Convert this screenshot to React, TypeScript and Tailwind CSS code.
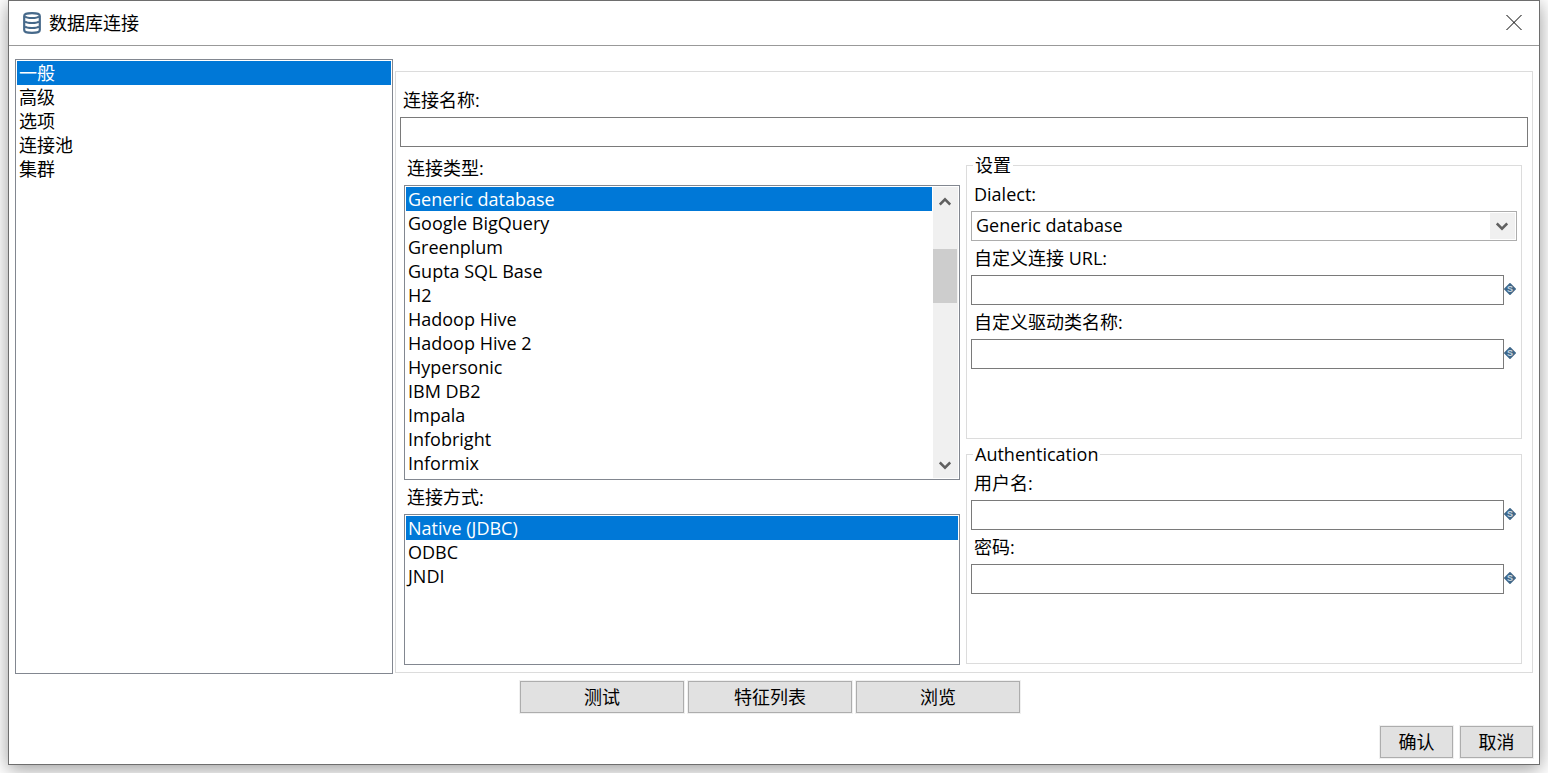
import { useState } from "react";
import type { ReactNode } from "react";

const sections = ["一般", "高级", "选项", "连接池", "集群"];

const databases = [
    "Generic database",
    "Google BigQuery",
    "Greenplum",
    "Gupta SQL Base",
    "H2",
    "Hadoop Hive",
    "Hadoop Hive 2",
    "Hypersonic",
    "IBM DB2",
    "Impala",
    "Infobright",
    "Informix",
];

const accessTypes = ["Native (JDBC)", "ODBC", "JNDI"];

function DatabaseIcon() {
    return (
        <svg width="18" height="22" viewBox="0 0 18 22" fill="none" stroke="#46698a" aria-hidden="true">
            <path d="M1.200 4C1.200 1.800 3 1.200 9 1.200s7.800.6 7.800 2.800v14c0 2.200-1.800 2.800-7.800 2.800S1.200 20.200 1.200 18z" strokeWidth="2.200" />
            <path d="M2 4.500c1 1 3.500 1.500 7 1.500s6-.5 7-1.500" strokeWidth="1.800" />
            <path d="M2 9.500c1 1 3.500 1.500 7 1.500s6-.5 7-1.500" strokeWidth="2.200" />
            <path d="M2 14.500c1 1 3.500 1.500 7 1.500s6-.5 7-1.500" strokeWidth="2.200" />
        </svg>
    );
}

// marks the fields that accept ${variables}
function VariableIcon() {
    return (
        <svg className="shrink-0" width="13" height="30" viewBox="0 0 13 30" aria-hidden="true">
            <path d="M6 8.800L11.200 14 6 19.200 .8 14z" fill="#3f6789" stroke="#3f6789" strokeWidth="1.600" strokeLinejoin="round" />
            <text x="6" y="17.300" textAnchor="middle" fontSize="9" fontWeight="bold" fontFamily="Liberation Sans, sans-serif" fill="#c9d6e0">S</text>
        </svg>
    );
}

function Chevron({ up }: { up?: boolean }) {
    return (
        <svg width="12" height="9" viewBox="0 0 12 9" fill="none" stroke="#606060" strokeWidth="2.500" aria-hidden="true">
            <path d={up ? "M.8 7.500L6 2.300l5.200 5.200" : "M.8 1.500L6 6.700l5.200-5.200"} />
        </svg>
    );
}

function ListBox({ label, items }: { label: string; items: string[] }) {
    const [selected, setSelected] = useState(items[0]);
    return (
        <ul role="listbox" aria-label={label} tabIndex={0} className="min-w-0 flex-1 outline-none">
            {items.map((item) => (
                <li
                    key={item}
                    role="option"
                    aria-selected={item === selected}
                    onClick={() => setSelected(item)}
                    className={`h-6 px-0.5 leading-6 cursor-default ${item === selected ? "bg-[#0078d7] text-white" : ""}`}
                >
                    {item}
                </li>
            ))}
        </ul>
    );
}

function Field({ id, label, type = "text" }: { id: string; label: string; type?: string }) {
    return (
        <div>
            <label htmlFor={id} className="block my-[5px] pl-[3px] leading-6">{label}</label>
            <div className="flex">
                <input id={id} type={type} className="min-w-0 flex-1 h-[30px] px-1 bg-white border border-[#7a7a7a] outline-none" />
                <VariableIcon />
            </div>
        </div>
    );
}

function Group({ title, className, children }: { title: string; className: string; children: ReactNode }) {
    return (
        <fieldset className={`min-w-0 px-1 pt-[3px] border border-[#dcdcdc] ${className}`}>
            <legend className="ml-0.5 px-0.5 leading-[18px]">{title}</legend>
            {children}
        </fieldset>
    );
}

function Button({ className, children }: { className: string; children: ReactNode }) {
    return (
        <button
            type="button"
            className={`h-8 bg-[#e1e1e1] border border-[#adadad] shadow-[0_0_0_1px_#f0f0f0] ${className}`}
        >
            {children}
        </button>
    );
}

export default function App() {
    return (
        <div className="min-h-screen px-2 pb-2 bg-white overflow-hidden text-black text-[18px] font-['Open_Sans','Noto_Sans_CJK_SC',sans-serif]">
            <div className="bg-white border border-[#6e6e6e] shadow-[0_4px_18px_rgba(0,0,0,0.4)]">
                <header className="flex items-center h-[45px] pl-3.5 pr-4 border-b border-[#999999]">
                    <DatabaseIcon />
                    <h1 className="ml-2 leading-6">数据库连接</h1>
                    <button type="button" aria-label="关闭" className="ml-auto">
                        <svg width="17" height="16" viewBox="0 0 17 16" stroke="black" aria-hidden="true">
                            <path d="M.5 0l15 15M15.500 0l-15 15" />
                        </svg>
                    </button>
                </header>

                <main className="flex gap-0.5 px-1.5 pt-[13px]">
                    <nav className="flex w-[378px] shrink-0 p-px border border-[#828790]">
                        <ListBox label="分类" items={sections} />
                    </nav>

                    <section className="min-w-0 flex-1 mt-3 mb-px px-1 pt-[11px] pb-[7px] border border-[#dcdcdc]">
                        <label htmlFor="name" className="block my-[5px] pl-[3px] leading-6">连接名称:</label>
                        <input id="name" type="text" className="block w-full h-[30px] px-1 bg-white border border-[#7a7a7a] outline-none" />

                        <div className="grid grid-cols-2 gap-1.5 mt-[9px] pl-1 pr-1.5">
                            <div className="min-w-0">
                                <div className="mb-[5px] pl-[3px] leading-6">连接类型:</div>
                                <div className="flex h-[295px] p-px border border-[#828790]">
                                    <ListBox label="连接类型" items={databases} />
                                    <div className="flex flex-col items-center justify-between w-[25px] ml-px pt-2.5 pb-2 pr-px bg-[#f0f0f0]">
                                        <Chevron up />
                                        <div className="w-full h-[54px] mb-[115px] bg-[#cdcdcd]" />
                                        <Chevron />
                                    </div>
                                </div>
                                <div className="my-[5px] pl-[3px] leading-6">连接方式:</div>
                                <div className="flex h-[151px] p-px border border-[#828790]">
                                    <ListBox label="连接方式" items={accessTypes} />
                                </div>
                            </div>

                            <div className="flex flex-col gap-1.5 min-w-0">
                                <Group title="设置" className="h-[283px]">
                                    <label htmlFor="dialect" className="block my-[5px] pl-[3px] leading-6">Dialect:</label>
                                    <div className="relative">
                                        <select id="dialect" className="block w-full h-[30px] pl-1 pr-8 pb-0.5 appearance-none bg-white border border-[#adadad] outline-none">
                                            {databases.map((db) => <option key={db}>{db}</option>)}
                                        </select>
                                        <span className="absolute inset-y-0.5 right-0.5 flex items-center justify-center w-[25px] pr-px bg-[#f0f0f0] pointer-events-none">
                                            <Chevron />
                                        </span>
                                    </div>
                                    <Field id="url" label="自定义连接 URL:" />
                                    <Field id="driver" label="自定义驱动类名称:" />
                                </Group>

                                <Group title="Authentication" className="h-[219px]">
                                    <Field id="user" label="用户名:" />
                                    <Field id="password" label="密码:" type="password" />
                                </Group>
                            </div>
                        </div>
                    </section>
                </main>

                <div className="flex justify-center gap-1 mt-[7px] pr-2">
                    <Button className="w-[164px]">测试</Button>
                    <Button className="w-[164px]">特征列表</Button>
                    <Button className="w-[164px]">浏览</Button>
                </div>

                <footer className="flex justify-end gap-[7px] mt-[13px] px-1.5 pb-1.5">
                    <Button className="w-[73px]">确认</Button>
                    <Button className="w-[73px]">取消</Button>
                </footer>
            </div>
        </div>
    );
}
